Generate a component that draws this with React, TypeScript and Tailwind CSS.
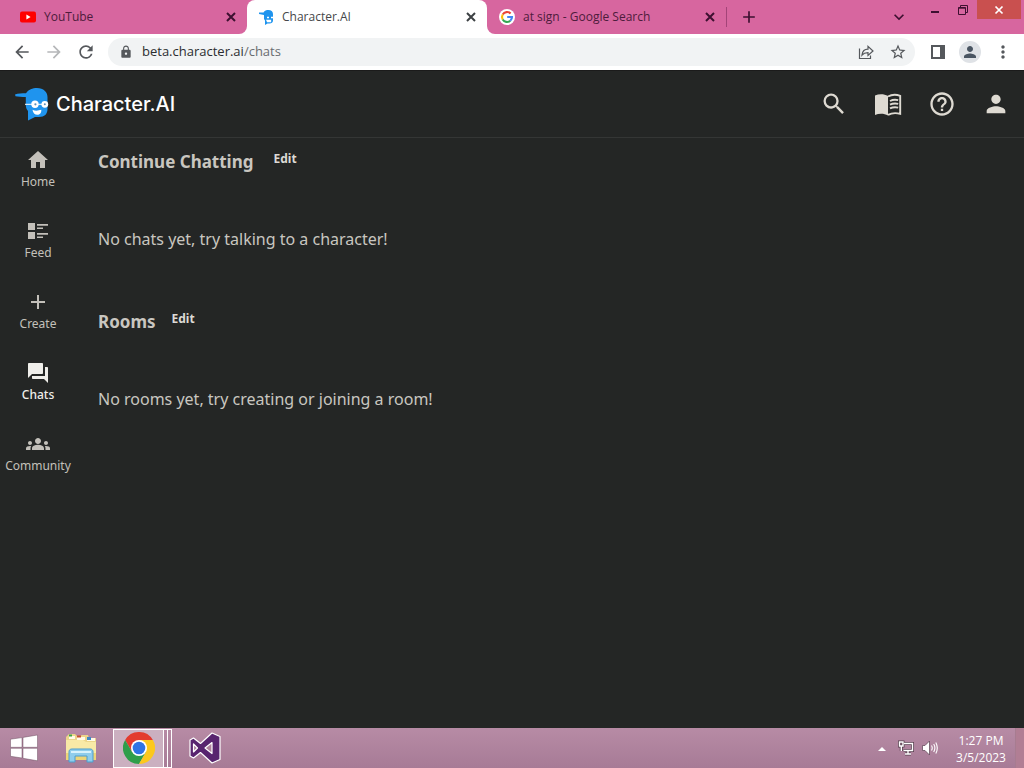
import React from 'react';
import {
  MdAdd,
  MdArrowBack,
  MdArrowForward,
  MdExpandMore,
  MdForum,
  MdGroups,
  MdHelpOutline,
  MdHome,
  MdLock,
  MdMoreVert,
  MdPerson,
  MdRefresh,
  MdSearch,
  MdStarBorder,
} from 'react-icons/md';

function YouTubeIcon() {
  return (
    <svg className="w-4 h-4 shrink-0" viewBox="0 0 16 16">
      <rect x="0" y="2.5" width="16" height="11" rx="2" fill="#f00" />
      <path d="M6.400 5.600v4.800L10.600 8z" fill="#fff" />
    </svg>
  );
}

function GoogleIcon() {
  return (
    <svg className="w-4 h-4 shrink-0" viewBox="0 0 16 16">
      <circle cx="8" cy="8" r="8" fill="#fff" />
      <g fill="none" strokeWidth="2.1">
        <path d="M11.6 4.6A5 5 0 0 0 3.7 5.5" stroke="#ea4335" />
        <path d="M3.7 5.5a5 5 0 0 0 0 5" stroke="#fbbc05" />
        <path d="M3.7 10.5a5 5 0 0 0 7.600 1.200" stroke="#34a853" />
        <path d="M11.3 11.7A5 5 0 0 0 13 8H8.200" stroke="#4285f4" />
      </g>
    </svg>
  );
}

function CharacterIcon({ className }: { className: string }) {
  return (
    <svg className={className} viewBox="0 0 36 34">
      <path
        d="M1 7.500C4 6.400 8 6.300 12 6.300 14.500 2.400 18.500 1 23 1c6.500 0 10.500 4 10.500 9v12c0 5-3 8-8.500 8h-4L14 33.500V24c-1.700-2-2.200-4-2.200-6.500V10C8 9.900 4 9.800 1.500 9.200z"
        fill="#1f94ee"
      />
      <path d="M11 17.300h20" stroke="#fff" strokeWidth="1" />
      <circle cx="21" cy="17.300" r="3.700" fill="#fff" />
      <circle cx="30.800" cy="17.300" r="3.400" fill="#fff" />
      <circle cx="21.400" cy="17.300" r="1.100" fill="#5b8fb9" />
      <circle cx="30.800" cy="17.300" r="1" fill="#5b8fb9" />
      <path d="M18.500 22.800c3 1.400 6 .8 8.800 0 .3 3-1.500 5-4 5s-4.500-2-4.800-5z" fill="#fff" />
    </svg>
  );
}

// small simplified version, only used as the tab favicon
function CharacterFavicon() {
  return (
    <svg className="w-4 h-4 shrink-0" viewBox="0 0 16 16">
      <path
        d="M0 3.500h4.500C5.500 1.500 7.500 1 9.500 1 12 1 14 2.500 14 5v6.500c0 2-1.500 3-3.500 3H8.500L6 16v-4.500L5 10V6L0 5z"
        fill="#1f94ee"
      />
      <path d="M8 8.500h2M12 8.500h2M8 11.300h3.500v1.200H8.500z" stroke="#fff" strokeWidth="1.300" fill="#fff" />
    </svg>
  );
}

function CloseIcon({ className }: { className: string }) {
  return (
    <svg className={className} viewBox="0 0 16 16">
      <path d="M4 4l8 8M12 4l-8 8" stroke="currentColor" strokeWidth="2" />
    </svg>
  );
}

function BookIcon() {
  return (
    <svg className="w-7 h-7" viewBox="0 0 28 28" fill="none" stroke="currentColor">
      <path d="M1 5.500C5 3.700 10 3.700 14 6v19.500c-4-2.300-9-2.300-13-.5z" fill="currentColor" stroke="none" />
      <path d="M14 6.500c4-2.200 8-2.200 12.200-.7v18c-4.200-1-8.200-1-12.200 1" strokeWidth="1.900" />
      <path d="M16 11c3-1.500 5.500-1.500 8.200-.8M16 14.700c3-1.500 5.500-1.500 8.200-.8M16 18.400c3-1.500 5.500-1.500 8.200-.8" strokeWidth="1.900" />
    </svg>
  );
}

function FeedIcon() {
  return (
    <svg className="w-5 h-5" viewBox="0 0 20 20" fill="currentColor">
      <path d="M0 2h7v7H0zM0 11h7v7H0zM9 3h11v1.700H9zM9 6.500h6v1.600H9zM9 12h11v1.700H9zM9 15.500h6v1.600H9z" />
    </svg>
  );
}

function WindowsIcon() {
  return (
    <svg className="w-7 h-7" viewBox="0 0 28 28" fill="#fff" stroke="#715365" strokeWidth=".5">
      <path d="M.5 5.200L12 3.600v9.700H.5zM13 3.400L27.500 1v12.300H13zM.5 14.300H12V24L.5 22.300zM13 14.300h14.500v12.500L13 24.300z" />
    </svg>
  );
}

function ExplorerIcon() {
  return (
    <svg className="w-8 h-8" viewBox="0 0 32 32">
      <path d="M2 4l2-2h6l2 2h3l2-1h6l1 3h7v22H1V5z" fill="#ecd58a" />
      <path d="M4 4h6v3H4zM12 5h8v3h-8zM22 6h8v3h-8z" fill="#fffbe8" />
      <path d="M4 2.500h3v2H4z" fill="#3da349" />
      <path d="M12 3.500h4v2h-4z" fill="#c8502d" />
      <path d="M22 5h4v3h-4z" fill="#3f8bc4" />
      <path d="M1 8h17l3 2h10v18H1z" fill="#f8e9a6" />
      <path d="M1 21h30v7H1z" fill="#edd578" />
      <path d="M4 30V20c0-2 1-3 3-3h18c2 0 3 1 3 3v10h-6v-6H10v6z" fill="#8fcdec" stroke="#4c9dcc" />
      <path d="M6 20h20" stroke="#d8f2fc" strokeWidth="2" />
    </svg>
  );
}

function ChromeIcon() {
  return (
    <svg className="w-8 h-8" viewBox="0 0 32 32">
      <path d="M16 8H29.860A16 16 0 0 0 2.140 8L9.070 20 16 16z" fill="#e33b2e" />
      <path d="M9.070 20L2.140 8A16 16 0 0 0 16 32l6.930-12L16 16z" fill="#2f9e4a" />
      <path d="M22.930 20L16 32A16 16 0 0 0 29.860 8H16v8z" fill="#fcc81c" />
      <circle cx="16" cy="16" r="8" fill="#fff" />
      <circle cx="16" cy="16" r="6.300" fill="#2f74e4" />
    </svg>
  );
}

function VisualStudioIcon() {
  return (
    <svg className="w-8 h-8" viewBox="0 0 32 32">
      <path
        fillRule="evenodd"
        d="M23 1l8 3.500v23L23 31 11.500 20.500 4.500 26 1 24V8l3.500-2 7 5.500zM23 10.500L16 16l7 5.500zM4.500 12v8l4-4z"
        fill="#58246f"
        stroke="#fff"
        strokeWidth="1.200"
        strokeLinejoin="round"
      />
    </svg>
  );
}

interface TabProps {
  icon: React.ReactNode;
  title: string;
  active?: boolean;
}

function Tab({ icon, title, active }: TabProps) {
  return (
    <div
      className={
        active
          ? 'w-60 h-full flex items-center gap-[7px] pl-3 pr-2 bg-white rounded-t-lg text-[#45474a]'
          : 'w-[239px] h-full flex items-center gap-2 pl-3 pr-2 text-[#4d1c3c]'
      }
    >
      {icon}
      <span className="flex-1 text-xs whitespace-nowrap">{title}</span>
      <button aria-label={`Close ${title}`} className={active ? 'text-[#3c4043]' : 'text-[#3d1030]'}>
        <CloseIcon className="w-4 h-4" />
      </button>
    </div>
  );
}

function TabStrip() {
  return (
    <div className="h-[34px] flex bg-[#d7669f]">
      {/* the white behind rounds off the pink next to the active tab */}
      <div className="flex bg-white">
        <div className="flex pl-2 bg-[#d7669f] rounded-br-lg">
          <Tab icon={<YouTubeIcon />} title="YouTube" />
        </div>
      </div>
      <Tab icon={<CharacterFavicon />} title="Character.AI" active />
      <div className="flex flex-1 bg-white">
        <div className="flex flex-1 items-center bg-[#d7669f] rounded-bl-lg text-[#3d1030]">
          <Tab icon={<GoogleIcon />} title="at sign - Google Search" />
          <div className="w-px h-5 bg-[#a34478]"></div>
          <button aria-label="New tab" className="ml-3">
            <MdAdd className="w-5 h-5" />
          </button>
          <div className="flex-1"></div>
          <button aria-label="Search tabs" className="mr-3">
            <MdExpandMore className="w-5 h-5" />
          </button>
          <div className="flex self-start">
            <button aria-label="Minimize" className="w-7 h-5 flex items-center justify-center">
              <svg className="w-3 h-3" viewBox="0 0 12 12">
                <path d="M2 8h8" stroke="currentColor" strokeWidth="2" />
              </svg>
            </button>
            <button aria-label="Restore" className="w-7 h-5 flex items-center justify-center">
              <svg className="w-3 h-3" viewBox="0 0 12 12" fill="none" stroke="currentColor">
                <path d="M3.500 3V1.500h7v7H9M1.500 3.500h7v7h-7zM1 4.200h8" />
              </svg>
            </button>
            <button aria-label="Close window" className="w-11 h-[19px] mr-[3px] flex items-center justify-center bg-[#c9504f] text-white">
              <CloseIcon className="w-3.5 h-3.5" />
            </button>
          </div>
        </div>
      </div>
    </div>
  );
}

function Toolbar() {
  return (
    <div className="h-[37px] flex items-center px-3 bg-white border-b border-[#1b1b1b] text-[#55585c]">
      <button aria-label="Back"><MdArrowBack className="w-5 h-5" /></button>
      <button aria-label="Forward" className="ml-3 text-[#b5b7b9]"><MdArrowForward className="w-5 h-5" /></button>
      <button aria-label="Reload" className="ml-3"><MdRefresh className="w-5 h-5" /></button>
      <div className="flex-1 h-7 ml-3 pl-[11px] pr-2 flex items-center gap-[9px] bg-[#f1f3f4] rounded-full">
        <MdLock className="w-3.5 h-3.5" />
        <a href="#" className="flex-1 text-[13px] text-[#696c70]">
          <span className="text-[#2b2d30]">beta.character.ai</span>/chats
        </a>
        <button aria-label="Share">
          <svg className="w-4 h-4" viewBox="0 0 16 16" fill="none" stroke="currentColor" strokeWidth="1.200">
            <path d="M1.500 4.500v10h11v-3M4 11c.5-4 2.500-5.800 6-5.800V2.300L15 7l-5 4.500V8.600C7.500 8.600 5.500 9.200 4 11z" />
          </svg>
        </button>
        <button aria-label="Bookmark" className="ml-1.5"><MdStarBorder className="w-[18px] h-[18px]" /></button>
      </div>
      <button aria-label="Side panel" className="ml-4">
        <svg className="w-3.5 h-3.5" viewBox="0 0 14 14">
          <path d="M1 1h12v12H1z" fill="none" stroke="currentColor" strokeWidth="2" />
          <path d="M9 1h4v12H9z" fill="currentColor" />
        </svg>
      </button>
      <button aria-label="Profile" className="ml-3.5 w-[22px] h-[22px] flex items-center justify-center rounded-full bg-[#dfe2e6] text-[#4a5562]">
        <MdPerson className="w-[18px] h-[18px]" />
      </button>
      <button aria-label="Menu" className="ml-3 -mr-px"><MdMoreVert className="w-5 h-5" /></button>
    </div>
  );
}

function SiteHeader() {
  return (
    <header className="h-[67px] flex items-center justify-between px-3.5 border-b border-[#343635]">
      <a href="#" className="flex items-center gap-1.5 text-white">
        <CharacterIcon className="w-9 h-[34px]" />
        <span className="font-['Inter'] text-xl font-medium">Character.AI</span>
      </a>
      <div className="flex items-center gap-[26px] text-[#dedad2]">
        <button aria-label="Search"><MdSearch className="w-7 h-7" /></button>
        <button aria-label="Guide"><BookIcon /></button>
        <button aria-label="Help"><MdHelpOutline className="w-7 h-7" /></button>
        <button aria-label="Account"><MdPerson className="w-7 h-7" /></button>
      </div>
    </header>
  );
}

const navItems = [
  { label: 'Home', icon: <MdHome className="w-6 h-6" /> },
  { label: 'Feed', icon: <FeedIcon /> },
  { label: 'Create', icon: <MdAdd className="w-6 h-6" /> },
  { label: 'Chats', icon: <MdForum className="w-6 h-6" />, active: true },
  { label: 'Community', icon: <MdGroups className="w-6 h-6" /> },
];

function Sidebar() {
  return (
    <nav className="w-[76px] shrink-0 flex flex-col gap-[30px] pt-3">
      {navItems.map(item => (
        <a
          key={item.label}
          href="#"
          className={
            item.active
              ? 'flex flex-col items-center text-xs leading-[18px] font-medium text-[#efeeea]'
              : 'flex flex-col items-center text-xs leading-[18px] text-[#c3c0ba]'
          }
        >
          <span className="h-5 mb-[3px] flex items-center">{item.icon}</span>
          {item.label}
        </a>
      ))}
    </nav>
  );
}

interface SectionProps {
  title: string;
  empty: string;
  headClass: string;
}

function Section({ title, empty, headClass }: SectionProps) {
  return (
    <section className="h-40">
      <div className={headClass}>
        <h2 className="text-[17px] leading-6 font-bold">{title}</h2>
        <button className="h-[18px] text-xs font-bold text-[#dcdad5]">Edit</button>
      </div>
      <p className="mt-[53px] text-base leading-6">{empty}</p>
    </section>
  );
}

function Taskbar() {
  return (
    <footer className="h-10 flex items-center bg-linear-to-b from-[#b78ba5] to-[#a77b96] text-white">
      <button aria-label="Start" className="ml-2.5"><WindowsIcon /></button>
      <button aria-label="File Explorer" className="ml-[27px]"><ExplorerIcon /></button>
      <button aria-label="Google Chrome" className="ml-4 h-[39px] flex">
        <span className="w-[51px] h-full flex items-center justify-center border border-white bg-[#cbb0c0]">
          <ChromeIcon />
        </span>
        <span className="w-1 h-full border-r border-y border-white"></span>
        <span className="w-1 h-full border-r border-y border-white"></span>
      </button>
      <button aria-label="Visual Studio" className="ml-[17px]"><VisualStudioIcon /></button>
      <div className="flex-1"></div>
      <button aria-label="Show hidden icons">
        <svg className="w-2 h-2" viewBox="0 0 8 8"><path d="M0 7h8L4 3z" fill="#fff" /></svg>
      </button>
      <button aria-label="Network" className="ml-3">
        <svg className="w-4 h-4" viewBox="0 0 16 16" fill="none" stroke="#594050" strokeWidth="3">
          <path d="M6 3.500h8.500v7H5.500M10 11v3M7 14h6M1.500 2h3.500v4H1.500zM3.300 6v5" />
          <path d="M6 3.500h8.500v7H5.500M10 11v3M7 14h6M1.500 2h3.500v4H1.500zM3.300 6v5" stroke="#fff" strokeWidth="1.400" />
        </svg>
      </button>
      <button aria-label="Volume" className="ml-2">
        <svg className="w-4 h-4" viewBox="0 0 16 16">
          <path d="M.5 5.500H3L7.500 1v14L3 10.500H.5z" fill="#fff" stroke="#594050" strokeWidth=".7" />
          <path d="M9.500 5.500q1.500 2.500 0 5M11.700 4q2.400 4 0 8M13.800 2.500q3 5.500 0 11" fill="none" stroke="#fff" strokeWidth="1.100" />
        </svg>
      </button>
      <div className="ml-4 pt-0.5 w-[54px] text-center text-xs leading-[17px] whitespace-nowrap">
        <div>1:27 PM</div>
        <div>3/5/2023</div>
      </div>
      <div className="ml-[7px] w-[9px] h-full border-l border-[#a77c90] bg-[#b17e94]"></div>
    </footer>
  );
}

export default function App() {
  return (
    <div className="min-h-screen flex flex-col bg-[#242625] font-['Open_Sans',sans-serif]">
      <TabStrip />
      <Toolbar />
      <div className="flex-1 flex flex-col font-['Noto_Sans',sans-serif] text-[#c9c6c0]">
        <SiteHeader />
        <div className="flex flex-1">
          <Sidebar />
          <main className="flex-1 pl-[22px] pt-3">
            <Section
              title="Continue Chatting"
              empty="No chats yet, try talking to a character!"
              headClass="flex gap-5"
            />
            <Section
              title="Rooms"
              empty="No rooms yet, try creating or joining a room!"
              headClass="flex gap-4"
            />
          </main>
        </div>
      </div>
      <Taskbar />
    </div>
  );
}
